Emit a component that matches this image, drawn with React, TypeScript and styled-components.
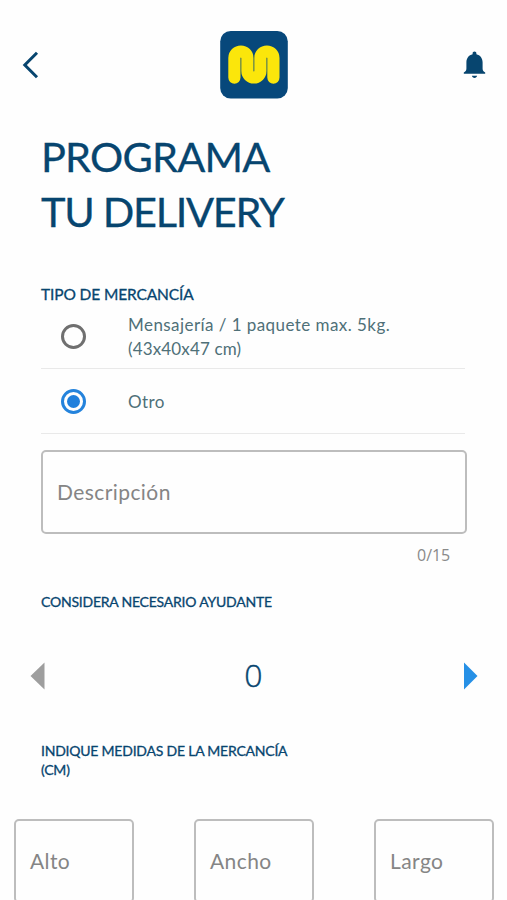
import React, { useState } from 'react';
import styled, { createGlobalStyle } from 'styled-components';

const navy = '#07456f';

const GlobalStyle = createGlobalStyle`
  *, *::before, *::after { box-sizing: border-box; }
  html, body { margin: 0; background: #fefefe; overflow: hidden; }
  body { font-family: Lato, "Open Sans", sans-serif; color: ${navy}; }
  button, input { font: inherit; }
`;

const Screen = styled.main`
  display: flex;
  flex-direction: column;
  width: 507px;
  height: 900px;
  overflow: hidden;

  > * { flex-shrink: 0; }
`;

const Header = styled.header`
  display: grid;
  grid-template-columns: 1fr auto 1fr;
  align-items: center;
  height: 128px;
  padding: 2px 21px 0 22px;
`;

const IconButton = styled.button<{ $end?: boolean }>`
  display: flex;
  justify-self: ${(p) => (p.$end ? 'end' : 'start')};
  padding: 0;
  border: 0;
  background: none;
`;

const Title = styled.h1`
  display: flex;
  flex-direction: column;
  margin: 0 0 45px 41px;
  padding-top: 1px;
  font-size: 41.5px;
  font-weight: 400;
  line-height: 55px;
  -webkit-text-stroke: 0.3px ${navy};
`;

const TitleLine = styled.span<{ $spacing: number }>`
  letter-spacing: ${(p) => p.$spacing}px;
`;

const Section = styled.section`
  display: flex;
  flex-direction: column;
  padding: 0 40px 0 41px;
`;

const SectionTitle = styled.h2<{ $large?: boolean }>`
  width: 260px;
  margin: 0;
  font-size: ${(p) => (p.$large ? 15.5 : 14)}px;
  font-weight: 400;
  line-height: ${(p) => (p.$large ? 20 : 19)}px;
  letter-spacing: ${(p) => (p.$large ? -0.12 : -0.22)}px;
  -webkit-text-stroke: 0.3px ${navy};
`;

const Option = styled.label`
  display: grid;
  grid-template-columns: 87px 1fr;
  align-items: center;
  height: 65px;
  width: 424px;
  border-bottom: 1px solid #e9e9e9;
`;

const Radio = styled.input`
  appearance: none;
  display: grid;
  place-items: center;
  width: 25px;
  height: 25px;
  margin: 1px 0 0 20px;
  border: 3px solid #6f6f6f;
  border-radius: 50%;

  &:checked { border-color: #2483dc; }
  &:checked::before {
    content: '';
    width: 13px;
    height: 13px;
    border-radius: 50%;
    background: #1f7fdc;
  }
`;

const OptionText = styled.span`
  padding-top: 2px;
  color: #4f7078;
  font-size: 17px;
  line-height: 24px;
  letter-spacing: 0.44px;
`;

const OptionSize = styled.span`
  display: block;
  letter-spacing: 0.15px;
`;

const Field = styled.label`
  display: flex;
  align-items: center;
  height: 84px;
  padding: 0 14px 2px;
  border: 2px solid #bdbdbd;
  border-radius: 5px;
  color: #858585;
  font-size: 21px;
  letter-spacing: 0.42px;
`;

const DescriptionField = styled(Field)`
  margin-top: 16px;
`;

const Counter = styled.span`
  align-self: flex-end;
  margin: 11px 17px 26px 0;
  color: #8a8a8a;
  font-family: "Open Sans", sans-serif;
  font-size: 16px;
  line-height: 21px;
  letter-spacing: -0.1px;
`;

const Stepper = styled.div`
  display: flex;
  align-items: center;
  justify-content: space-between;
  height: 130px;
  padding: 0 29px 0 30px;
`;

const StepValue = styled.output`
  font-family: "Open Sans", sans-serif;
  font-size: 32px;
  font-weight: 300;
  line-height: 40px;
  padding: 0 1px 3px 0;
  -webkit-text-stroke: 0.4px ${navy};
`;

const Measures = styled.div`
  display: grid;
  grid-template-columns: repeat(3, 120px);
  column-gap: 60px;
  margin: 40px 0 0 14px;
`;

const BackIcon = () => (
  <svg width="18" height="28" viewBox="0 0 18 28" fill="none" stroke={navy} strokeWidth="3">
    <path d="M15 1.8 2.8 14 15 26.2" />
  </svg>
);

const BellIcon = () => (
  <svg width="23" height="28" viewBox="0 0 23 28" fill={navy}>
    <path d="M11.5 .6c1.1 0 1.9.8 1.9 1.8v.8c3.8.9 6.2 3.9 6.2 8v6.2c0 2.2 1 3.2 2.6 4v1.4H.8v-1.4c1.6-.8 2.6-1.8 2.6-4v-6.2c0-4.1 2.4-7.1 6.2-8v-.8c0-1 .8-1.8 1.9-1.8Z" />
    <path d="M8.9 24.7h5.2c-.3 1.4-1.3 2.2-2.6 2.2s-2.3-.8-2.6-2.2Z" />
  </svg>
);

const Logo = () => (
  <svg width="68" height="68" viewBox="0 0 68 68" role="img" aria-label="M">
    <rect x="0.2" y="0" width="67.6" height="67.6" rx="10.5" fill="#07487b" />
    <path
      d="M14.4 46.6V27a6.500 6.500 0 0 1 13 0V40a6.500 6.500 0 0 0 13 0V27a6.500 6.500 0 0 1 13 0V46.6"
      fill="none"
      stroke="#fbe60b"
      strokeWidth="12.2"
      strokeLinecap="round"
    />
  </svg>
);

const Arrow = ({ next }: { next?: boolean }) => (
  <svg width="15" height="28" viewBox="0 0 15 28" fill={next ? '#2690e6' : '#9e9e9e'}>
    <path d={next ? 'M1 .5 14.5 14 1 27.5Z' : 'M14.5 .5 .5 14l14 13.5Z'} />
  </svg>
);

export default function App() {
  const [kind, setKind] = useState('otro');
  const [helpers, setHelpers] = useState(0);

  return (
    <>
      <GlobalStyle />
      <Screen>
        <Header>
          <IconButton aria-label="Volver"><BackIcon /></IconButton>
          <Logo />
          <IconButton $end aria-label="Notificaciones"><BellIcon /></IconButton>
        </Header>
        <Title>
          <TitleLine $spacing={-0.8}>PROGRAMA</TitleLine>
          <TitleLine $spacing={-1.3}>TU DELIVERY</TitleLine>
        </Title>
        <Section>
          <SectionTitle $large>TIPO DE MERCANCÍA</SectionTitle>
          <Option>
            <Radio type="radio" name="kind" checked={kind === 'mensajeria'} onChange={() => setKind('mensajeria')} />
            <OptionText>
              Mensajería / 1 paquete max. 5kg.
              <OptionSize>(43x40x47 cm)</OptionSize>
            </OptionText>
          </Option>
          <Option>
            <Radio type="radio" name="kind" checked={kind === 'otro'} onChange={() => setKind('otro')} />
            <OptionText>Otro</OptionText>
          </Option>
          <DescriptionField>Descripción</DescriptionField>
          <Counter>0/15</Counter>
          <SectionTitle>CONSIDERA NECESARIO AYUDANTE</SectionTitle>
        </Section>
        <Stepper>
          <IconButton aria-label="Menos" onClick={() => setHelpers(Math.max(0, helpers - 1))}><Arrow /></IconButton>
          <StepValue>{helpers}</StepValue>
          <IconButton aria-label="Más" onClick={() => setHelpers(helpers + 1)}><Arrow next /></IconButton>
        </Stepper>
        <Section>
          <SectionTitle>INDIQUE MEDIDAS DE LA MERCANCÍA (CM)</SectionTitle>
        </Section>
        <Measures>
          <Field>Alto</Field>
          <Field>Ancho</Field>
          <Field>Largo</Field>
        </Measures>
      </Screen>
    </>
  );
}
